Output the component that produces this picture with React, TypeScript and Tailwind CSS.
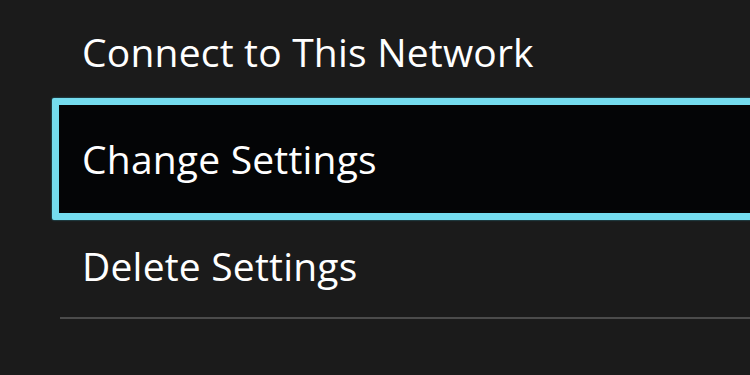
import React from 'react';

const items = ['Connect to This Network', 'Change Settings', 'Delete Settings'];

export default function App() {
  return (
    <div
      className="w-[750px] h-[375px] overflow-hidden bg-[#1b1b1b] text-white"
      style={{ fontFamily: '"Open Sans", "Noto Sans", sans-serif' }}
    >
      <div className="-mt-px pl-[60px]">
        {items.map((label, i) => (
          <div key={label} className="relative h-[107px] flex items-center">
            {i === 1 && (
              <div className="absolute -top-2 -bottom-[7px] -left-2 -right-4 border-[7px] border-[#74dcee] bg-[#040506] rounded-[2px] shadow-[0_0_2px_#2a8fa0]" />
            )}
            <span className="relative pl-[22px] text-[39px] tracking-[0.2px]">{label}</span>
          </div>
        ))}
        <div className="-mt-[3px] h-[2px] bg-[#4b4b4b]" />
      </div>
    </div>
  );
}
